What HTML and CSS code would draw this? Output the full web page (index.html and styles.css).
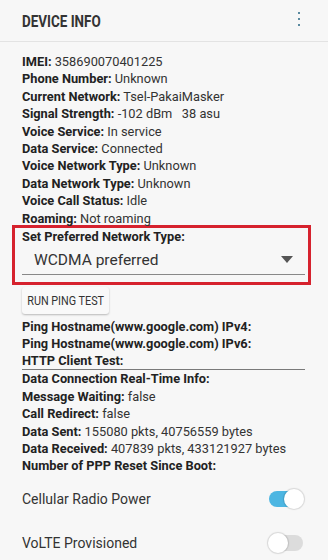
FILE: index.html
```html
<!DOCTYPE html>
<html lang="en">
<head>
  <meta charset="UTF-8">
  <meta name="viewport" content="width=device-width, initial-scale=1.0">
  <title>Device Info</title>
  <link rel="stylesheet" href="styles.css">
</head>
<body>
  <div class="bar">
    <h1 class="title">DEVICE INFO</h1>
    <div class="more">
      <span></span>
      <span></span>
      <span></span>
    </div>
  </div>
  <div class="info">
    <p class="row"><b>IMEI:</b> 358690070401225</p>
    <p class="row"><b>Phone Number:</b> Unknown</p>
    <p class="row"><b>Current Network:</b> Tsel-PakaiMasker</p>
    <p class="row"><b>Signal Strength:</b> -102 dBm&nbsp;&nbsp; 38 asu</p>
    <p class="row"><b>Voice Service:</b> In service</p>
    <p class="row"><b>Data Service:</b> Connected</p>
    <p class="row"><b>Voice Network Type:</b> Unknown</p>
    <p class="row"><b>Data Network Type:</b> Unknown</p>
    <p class="row"><b>Voice Call Status:</b> Idle</p>
    <p class="row"><b>Roaming:</b> Not roaming</p>
    <div class="pref">
      <p class="row"><b>Set Preferred Network Type:</b></p>
      <div class="select">
        <span>WCDMA preferred</span>
        <i class="caret"></i>
      </div>
    </div>
    <button class="btn"><span>RUN PING TEST</span></button>
    <p class="row"><b>Ping Hostname(www.google.com) IPv4:</b></p>
    <p class="row"><b>Ping Hostname(www.google.com) IPv6:</b></p>
    <p class="row ruled"><b>HTTP Client Test:</b></p>
    <p class="row"><b>Data Connection Real-Time Info:</b></p>
    <p class="row"><b>Message Waiting:</b> false</p>
    <p class="row"><b>Call Redirect:</b> false</p>
    <p class="row"><b>Data Sent:</b> 155080 pkts, 40756559 bytes</p>
    <p class="row"><b>Data Received:</b> 407839 pkts, 433121927 bytes</p>
    <p class="row"><b>Number of PPP Reset Since Boot:</b></p>
  </div>
  <ul class="settings">
    <li>
      <span>Cellular Radio Power</span>
      <span class="switch on"></span>
    </li>
    <li>
      <span>VoLTE Provisioned</span>
      <span class="switch"></span>
    </li>
  </ul>
</body>
</html>
```

FILE: styles.css
```css
*{
  margin: 0;
  padding: 0;
  box-sizing: border-box;
}
ul{
  list-style: none;
}
body{
  width: 328px;
  height: 560px;
  overflow: hidden;
  background-color: #f7f7f7;
  font-family: Roboto, "Liberation Sans", sans-serif;
  color: #2b2b2b;
}
.bar{
  height: 42px;
  display: flex;
  align-items: center;
  justify-content: space-between;
  padding: 0 28px 0 22px;
  border-bottom: 1px solid #e3e3e3;
}
.title{
  font-size: 17px;
  font-weight: 700;
  color: #333;
  transform: scaleX(0.79);
  transform-origin: left center;
}
.more{
  display: flex;
  flex-direction: column;
  gap: 4px;
  margin-top: -4px;
}
.more span{
  width: 2px;
  height: 2px;
  background-color: #5a8aa0;
}
.info{
  padding: 11px 23px 0 22px;
}
.row{
  font-size: 12.8px;
  line-height: 17.4px;
  color: #333;
  white-space: nowrap;
}
.row b{
  font-weight: 700;
  color: #222;
}
.ruled{
  border-bottom: 1.5px solid #7a7a7a;
  line-height: 16.5px;
}
.pref{
  margin: -2px -6px 0 -10px;
  padding: 0 3px 0 7px;
  height: 60px;
  border: 3px solid #d6222e;
}
.pref .row{
  line-height: 17px;
  margin-top: 0;
}
.select{
  height: 30px;
  display: flex;
  align-items: center;
  justify-content: space-between;
  padding: 0 12px 0 12px;
  border-bottom: 1.5px solid #888;
  font-size: 15.5px;
  color: #333;
}
.caret{
  width: 0;
  height: 0;
  border-left: 6px solid transparent;
  border-right: 6px solid transparent;
  border-top: 7px solid #555;
}
.btn{
  display: flex;
  align-items: center;
  justify-content: center;
  width: 87px;
  height: 27px;
  margin: 2px 0 4px 0;
  border: none;
  border-radius: 3px;
  background-color: #f9f9f9;
  box-shadow: 0 1px 2px rgba(0,0,0,0.25);
  font-family: Roboto, "Liberation Sans", sans-serif;
  font-size: 12px;
  color: #333;
  overflow: hidden;
}
.btn span{
  display: inline-block;
  transform: scaleX(0.9);
  white-space: nowrap;
}
.settings{
  padding: 2px 25px 0 22px;
}
.settings li{
  height: 44px;
  display: flex;
  align-items: center;
  justify-content: space-between;
  font-size: 14px;
  color: #333;
}
.switch{
  position: relative;
  width: 34px;
  height: 16px;
  border-radius: 8px;
  background-color: #dcdcdc;
}
.switch::after{
  content: "";
  position: absolute;
  left: -1px;
  top: -2px;
  width: 20px;
  height: 20px;
  border-radius: 50%;
  background-color: #fff;
  box-shadow: 0 0 1px 1px rgba(0,0,0,0.12);
}
.switch.on{
  background-color: #4db6e2;
}
.switch.on::after{
  left: 15px;
}
```
